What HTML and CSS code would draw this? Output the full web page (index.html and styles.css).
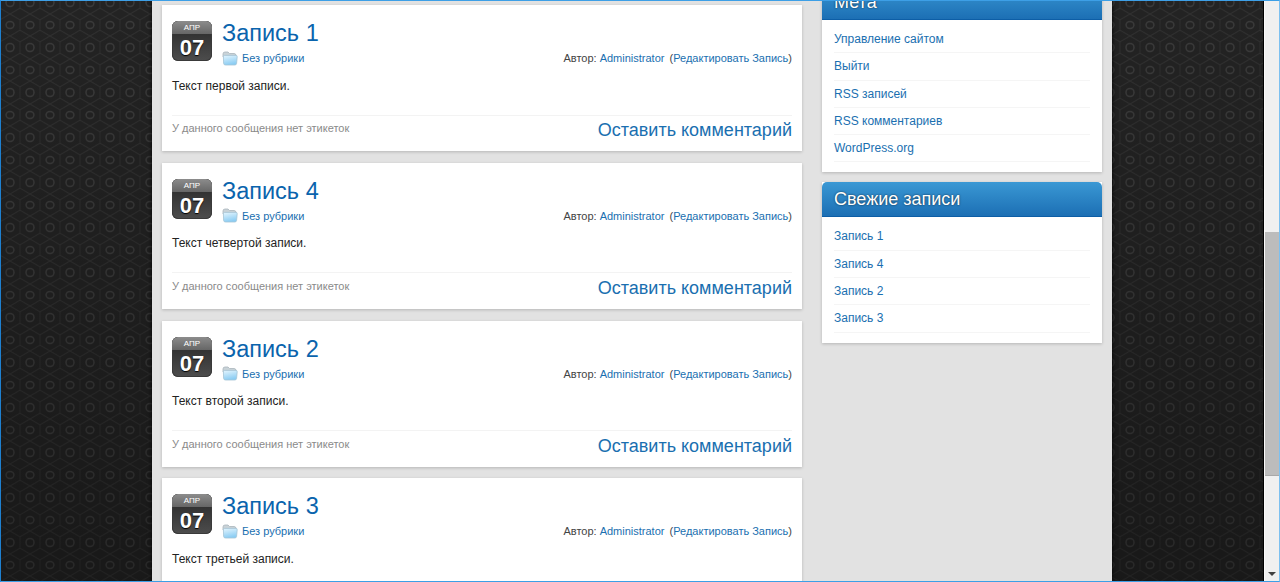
FILE: index.html
```html
<!DOCTYPE html>
<html>
<head>
    <title>Записи</title>
    <link rel="stylesheet" href="styles.css">
</head>
<body>
    <svg class="defs">
        <defs>
            <linearGradient id="folder-front" x1="0" y1="0" x2="0.3" y2="1">
                <stop offset="0" stop-color="#e4f5fe"/>
                <stop offset="1" stop-color="#8ccdf3"/>
            </linearGradient>
        </defs>
        <symbol id="folder" viewBox="0 0 16 15">
            <path d="M1 3 Q1 1 3 1 H6 L7.5 2.5 H12 Q14 2.5 14 4.5 V6 H1 Z" fill="#c9d3d8" stroke="#a9b5bc" stroke-width="0.8"/>
            <path d="M1.4 5.5 Q1.4 4.4 2.6 4.4 H14 Q15.4 4.4 15.2 5.8 L14.6 12.4 Q14.4 14 12.8 14 H3.4 Q1.6 14 1.6 12.2 Z" fill="url(#folder-front)" stroke="#a5c4d6" stroke-width="0.8"/>
        </symbol>
    </svg>
    <div class="window">
        <div class="page">
            <div class="wrap">
                <div class="content">
                    <div class="post">
                        <div class="post-head">
                            <div class="date"><span class="month">АПР</span><span class="day">07</span></div>
                            <div class="post-info">
                                <h2><a href="#">Запись 1</a></h2>
                                <div class="meta">
                                    <span class="cat"><svg class="folder"><use href="#folder"/></svg><a href="#">Без рубрики</a></span>
                                    <span class="author">Автор: <a href="#">Administrator</a> <span class="edit">(<a href="#">Редактировать Запись</a>)</span></span>
                                </div>
                            </div>
                        </div>
                        <p class="text">Текст первой записи.</p>
                        <div class="post-foot">
                            <span class="tags">У данного сообщения нет этикеток</span>
                            <a class="comment" href="#">Оставить комментарий</a>
                        </div>
                    </div>
                    <div class="post">
                        <div class="post-head">
                            <div class="date"><span class="month">АПР</span><span class="day">07</span></div>
                            <div class="post-info">
                                <h2><a href="#">Запись 4</a></h2>
                                <div class="meta">
                                    <span class="cat"><svg class="folder"><use href="#folder"/></svg><a href="#">Без рубрики</a></span>
                                    <span class="author">Автор: <a href="#">Administrator</a> <span class="edit">(<a href="#">Редактировать Запись</a>)</span></span>
                                </div>
                            </div>
                        </div>
                        <p class="text">Текст четвертой записи.</p>
                        <div class="post-foot">
                            <span class="tags">У данного сообщения нет этикеток</span>
                            <a class="comment" href="#">Оставить комментарий</a>
                        </div>
                    </div>
                    <div class="post">
                        <div class="post-head">
                            <div class="date"><span class="month">АПР</span><span class="day">07</span></div>
                            <div class="post-info">
                                <h2><a href="#">Запись 2</a></h2>
                                <div class="meta">
                                    <span class="cat"><svg class="folder"><use href="#folder"/></svg><a href="#">Без рубрики</a></span>
                                    <span class="author">Автор: <a href="#">Administrator</a> <span class="edit">(<a href="#">Редактировать Запись</a>)</span></span>
                                </div>
                            </div>
                        </div>
                        <p class="text">Текст второй записи.</p>
                        <div class="post-foot">
                            <span class="tags">У данного сообщения нет этикеток</span>
                            <a class="comment" href="#">Оставить комментарий</a>
                        </div>
                    </div>
                    <div class="post">
                        <div class="post-head">
                            <div class="date"><span class="month">АПР</span><span class="day">07</span></div>
                            <div class="post-info">
                                <h2><a href="#">Запись 3</a></h2>
                                <div class="meta">
                                    <span class="cat"><svg class="folder"><use href="#folder"/></svg><a href="#">Без рубрики</a></span>
                                    <span class="author">Автор: <a href="#">Administrator</a> <span class="edit">(<a href="#">Редактировать Запись</a>)</span></span>
                                </div>
                            </div>
                        </div>
                        <p class="text">Текст третьей записи.</p>
                        <div class="post-foot">
                            <span class="tags">У данного сообщения нет этикеток</span>
                            <a class="comment" href="#">Оставить комментарий</a>
                        </div>
                    </div>
                </div>
                <div class="sidebar">
                    <div class="widget">
                        <h3>Мета</h3>
                        <ul>
                            <li><a href="#">Управление сайтом</a></li>
                            <li><a href="#">Выйти</a></li>
                            <li><a href="#">RSS записей</a></li>
                            <li><a href="#">RSS комментариев</a></li>
                            <li><a href="#">WordPress.org</a></li>
                        </ul>
                    </div>
                    <div class="widget">
                        <h3>Свежие записи</h3>
                        <ul>
                            <li><a href="#">Запись 1</a></li>
                            <li><a href="#">Запись 4</a></li>
                            <li><a href="#">Запись 2</a></li>
                            <li><a href="#">Запись 3</a></li>
                        </ul>
                    </div>
                </div>
            </div>
        </div>
        <div class="scrollbar">
            <div class="thumb"></div>
            <div class="arrow"></div>
        </div>
    </div>
</body>
</html>
```

FILE: styles.css
```css
html, body {
    margin: 0;
    height: 100%;
    overflow: hidden;
}
body {
    font-family: "Liberation Sans", Arial, sans-serif;
    font-size: 12px;
    color: #222;
}
a {
    color: #1a6fb0;
    text-decoration: none;
}
.defs {
    display: block;
    width: 0;
    height: 0;
}
.window {
    display: flex;
    height: 582px;
    box-sizing: border-box;
    border: 1px solid #3d9fe6;
    border-right-color: #7cc0f0;
    border-left-color: #1e80d0;
}
.page {
    flex: 1;
    overflow: hidden;
    background-color: #232323;
    background-image: linear-gradient(rgba(0, 0, 0, 0), rgba(0, 0, 0, 0.3)), url("data:image/svg+xml,%3Csvg xmlns='http://www.w3.org/2000/svg' width='20' height='22.5'%3E%3Cg fill='none'%3E%3Ccircle cx='10' cy='11.25' r='4' stroke='%233a3a3a' stroke-width='1.5'/%3E%3Cpath d='M0 5.6 L10 0 L20 5.6 M0 16.9 L10 22.5 L20 16.9 M0 5.6 V16.9 M20 5.6 V16.9' stroke='%23303030'/%3E%3C/g%3E%3C/svg%3E");
    background-position: 0 0, -1px -9.75px;
    box-shadow: inset -1px 0 #000;
}
.wrap {
    width: 940px;
    height: 100%;
    margin-left: 151px;
    padding: 0 10px;
    display: flex;
    background: #e2e2e2;
    box-shadow: 0 0 4px #000;
}
.content {
    width: 640px;
    margin-top: 4.2px;
}
.sidebar {
    width: 280px;
    margin-left: 20px;
    margin-top: -16px;
}
.post {
    height: 146px;
    margin-bottom: 11.7px;
    padding: 11px 10px 0;
    box-sizing: border-box;
    background: #fff;
    box-shadow: 0 1px 3px rgba(0, 0, 0, 0.2);
}
.post-head {
    display: flex;
}
.date {
    width: 40px;
    height: 40px;
    margin-top: 5px;
    margin-right: 10px;
    border-radius: 6px;
    overflow: hidden;
    display: flex;
    flex-direction: column;
    align-items: center;
    background: linear-gradient(#262626, #4d4d4d);
    box-shadow: inset 0 0 0 1px #3a3a3a;
    flex-shrink: 0;
}
.month {
    width: 100%;
    height: 13px;
    line-height: 13px;
    text-align: center;
    font-size: 8px;
    color: #fff;
    background: linear-gradient(#8c8c8c, #666);
}
.day {
    font-size: 22px;
    line-height: 27px;
    font-weight: bold;
    color: #fff;
    text-shadow: 0 1px 1px #000;
}
.post-info {
    flex: 1;
}
h2 {
    margin: 2px 0 0;
    font-size: 23.5px;
    font-weight: normal;
    line-height: 30px;
}
h2 a {
    color: #0a64ad;
}
.meta {
    display: flex;
    justify-content: space-between;
    align-items: center;
    height: 20px;
    font-size: 11px;
}
.author {
    color: #444;
}
.edit {
    margin-left: 2px;
}
.cat {
    display: flex;
    align-items: center;
}
.folder {
    width: 16px;
    height: 15px;
    margin-right: 4px;
}
.text {
    margin: 9.5px 0 0;
    line-height: 16px;
}
.post-foot {
    display: flex;
    justify-content: space-between;
    margin-top: 21px;
    padding-top: 3.5px;
    border-top: 1px solid #f3f3f3;
}
.tags {
    font-size: 11px;
    color: #8a8a8a;
    line-height: 18px;
}
.comment {
    font-size: 18px;
    line-height: 22px;
}
.widget {
    margin-bottom: 10px;
    padding-bottom: 10px;
    background: #fff;
    box-shadow: 0 1px 3px rgba(0, 0, 0, 0.2);
}
.widget h3 {
    margin: 0;
    height: 34px;
    padding: 0 12px;
    line-height: 34px;
    font-size: 18px;
    font-weight: normal;
    color: #fff;
    text-shadow: 0 0 2px #123;
    border-radius: 5px 5px 0 0;
    border-bottom: 1px solid #0d5ea6;
    background: linear-gradient(#3a98d4, #1c6fb4);
}
.widget ul {
    list-style: none;
    margin: 6px 12px 0;
    padding: 0;
}
.widget li {
    height: 26.3px;
    line-height: 26px;
    border-bottom: 1px solid #f5f5f5;
}
.scrollbar {
    width: 14px;
    background: #f0f0f0;
    border-left: 1px solid #fafafa;
    display: flex;
    flex-direction: column;
}
.thumb {
    height: 244px;
    margin-top: 231px;
    background: #bcbcbc;
    border-bottom: 1px solid #a8a8a8;
    box-sizing: border-box;
}
.arrow {
    width: 0;
    height: 0;
    margin: auto auto 5px;
    border: 4px solid transparent;
    border-top-color: #404040;
    border-bottom-width: 0;
}
```
